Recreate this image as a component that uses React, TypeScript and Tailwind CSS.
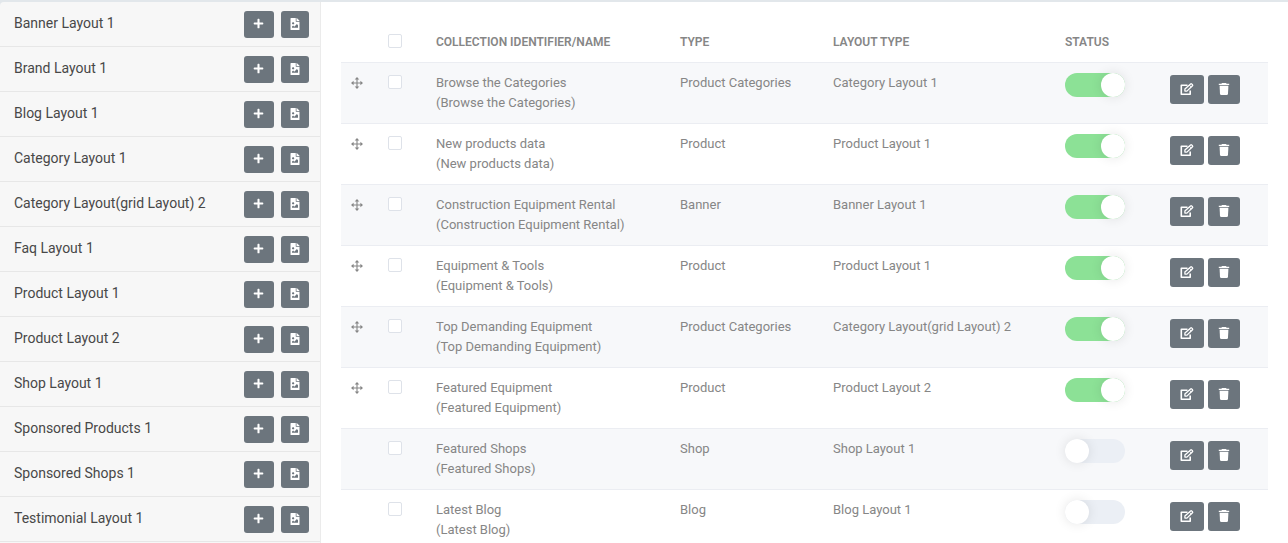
import { FaPlus, FaFileImage } from "react-icons/fa";

const layouts = [
  "Banner Layout 1",
  "Brand Layout 1",
  "Blog Layout 1",
  "Category Layout 1",
  "Category Layout(grid Layout) 2",
  "Faq Layout 1",
  "Product Layout 1",
  "Product Layout 2",
  "Shop Layout 1",
  "Sponsored Products 1",
  "Sponsored Shops 1",
  "Testimonial Layout 1",
];

type Collection = { name: string; type: string; layout: string; active: boolean };

const collections: Collection[] = [
  { name: "Browse the Categories", type: "Product Categories", layout: "Category Layout 1", active: true },
  { name: "New products data", type: "Product", layout: "Product Layout 1", active: true },
  { name: "Construction Equipment Rental", type: "Banner", layout: "Banner Layout 1", active: true },
  { name: "Equipment & Tools", type: "Product", layout: "Product Layout 1", active: true },
  { name: "Top Demanding Equipment", type: "Product Categories", layout: "Category Layout(grid Layout) 2", active: true },
  { name: "Featured Equipment", type: "Product", layout: "Product Layout 2", active: true },
  { name: "Featured Shops", type: "Shop", layout: "Shop Layout 1", active: false },
  { name: "Latest Blog", type: "Blog", layout: "Blog Layout 1", active: false },
];

const button = "flex items-center justify-center rounded-[3px] bg-[#6c757d] text-white";

function MoveIcon() {
  return (
    <svg width="12" height="12" viewBox="0 0 12 12" aria-hidden="true">
      <path d="M6 1.5v9M1.5 6h9" stroke="currentColor" strokeWidth="1.1" />
      <path
        d="M6 0 8.3 2.6H3.7ZM6 12 3.7 9.4h4.6ZM0 6l2.6-2.3v4.6ZM12 6 9.4 8.3V3.7Z"
        fill="currentColor"
      />
    </svg>
  );
}

function EditIcon() {
  return (
    <svg width="14" height="13" viewBox="0 0 14 13" fill="none" stroke="currentColor" aria-hidden="true">
      <path d="M7.5 2.2H1.3v9h8.9V7.6" strokeWidth="1.6" strokeLinejoin="round" />
      <path d="M4.9 8.1v-2L10.6.9q.5-.4 1 0l.9.9q.4.5 0 .9L6.9 8.1Z" strokeWidth="1.3" strokeLinejoin="round" />
      <path d="m9.4 2.2 1.9 1.9" strokeWidth="1" />
    </svg>
  );
}

function TrashIcon() {
  return (
    <svg width="12" height="12" viewBox="0 0 12 12" fill="currentColor" aria-hidden="true">
      <path d="M4 0h4l.6.7h2.6v1.4H.8V.7h2.6Z" />
      <path d="M1.6 2.7h8.8L10 10.8q-.1 1.2-1.3 1.2H3.3Q2.1 12 2 10.8Z" />
    </svg>
  );
}

function Checkbox({ label }: { label: string }) {
  return (
    <input
      type="checkbox"
      aria-label={label}
      className="block size-3.5 appearance-none rounded-[2px] border border-[#dee2e9] bg-white checked:bg-[#6c757d]"
    />
  );
}

function Switch({ label, active }: { label: string; active: boolean }) {
  return (
    <input
      type="checkbox"
      role="switch"
      aria-label={label}
      defaultChecked={active}
      className="block h-6 w-[60px] appearance-none rounded-full bg-[#ebeff5] before:block before:size-6 before:rounded-full before:bg-white before:shadow-[0_0_12px_rgba(0,0,0,0.1)] checked:bg-[#8ce196] checked:before:ml-9"
    />
  );
}

function Sidebar() {
  return (
    <aside className="w-[321px] shrink-0 rounded-tl border-r border-[#ebebeb] bg-[#f7f7f7]">
      <ul>
        {layouts.map((name) => (
          <li key={name} className="flex h-[45px] items-center border-b border-[#e7e7e7] pr-[11px] pl-3.5">
            <span className="grow pb-0.5 text-sm text-[#484848]">{name}</span>
            <button type="button" aria-label={`Add ${name}`} className={`${button} mr-[7px] h-[27px] w-[30px] pr-px pb-px`}>
              <FaPlus size={11} />
            </button>
            <button type="button" aria-label={`Preview ${name}`} className={`${button} h-[27px] w-7 pb-px`}>
              <FaFileImage size={12} />
            </button>
          </li>
        ))}
      </ul>
    </aside>
  );
}

function CollectionRow({ item }: { item: Collection }) {
  return (
    <tr className="border-t border-[#ebedf2] align-top odd:bg-[#f7f8fa]">
      <td className="px-2.5 pt-3.5">{item.active && <MoveIcon />}</td>
      <td className="px-2.5 pt-3">
        <Checkbox label={`Select ${item.name}`} />
      </td>
      <td className="px-2.5 py-2.5">
        {item.name}
        <br />({item.name})
      </td>
      <td className="px-2.5 py-2.5">{item.type}</td>
      <td className="px-2.5 py-2.5">{item.layout}</td>
      <td className="px-2.5 py-2.5">
        <Switch label={`${item.name} status`} active={item.active} />
      </td>
      <td className="px-2.5 pt-3">
        <div className="flex gap-1">
          <button type="button" aria-label={`Edit ${item.name}`} className={`${button} h-[29px] w-[34px]`}>
            <EditIcon />
          </button>
          <button type="button" aria-label={`Delete ${item.name}`} className={`${button} h-[29px] w-8 pb-px`}>
            <TrashIcon />
          </button>
        </div>
      </td>
    </tr>
  );
}

export default function App() {
  return (
    <div className="bg-[#e2e7eb] pt-0.5 font-['Roboto',sans-serif]">
      <div className="flex">
        <Sidebar />
        <main className="min-w-0 grow bg-white px-5 pt-[18px]">
          <table className="w-full table-fixed border-collapse text-left text-[13px] leading-5 text-[#868686]">
            <colgroup>
              <col className="w-[37px]" />
              <col className="w-12" />
              <col />
              <col className="w-[153px]" />
              <col className="w-[232px]" />
              <col className="w-[105px]" />
              <col className="w-[108px]" />
            </colgroup>
            <thead>
              <tr className="h-[42px] text-xs leading-5 uppercase">
                <td />
                <th className="px-2.5">
                  <Checkbox label="Select all collections" />
                </th>
                <th className="px-2.5 pt-0.5 font-semibold">Collection Identifier/Name</th>
                <th className="px-2.5 pt-0.5 font-semibold">Type</th>
                <th className="px-2.5 pt-0.5 font-semibold">Layout Type</th>
                <th className="px-2.5 pt-0.5 font-semibold">Status</th>
                <td />
              </tr>
            </thead>
            <tbody>
              {collections.map((item) => (
                <CollectionRow key={item.name} item={item} />
              ))}
            </tbody>
          </table>
        </main>
      </div>
    </div>
  );
}
